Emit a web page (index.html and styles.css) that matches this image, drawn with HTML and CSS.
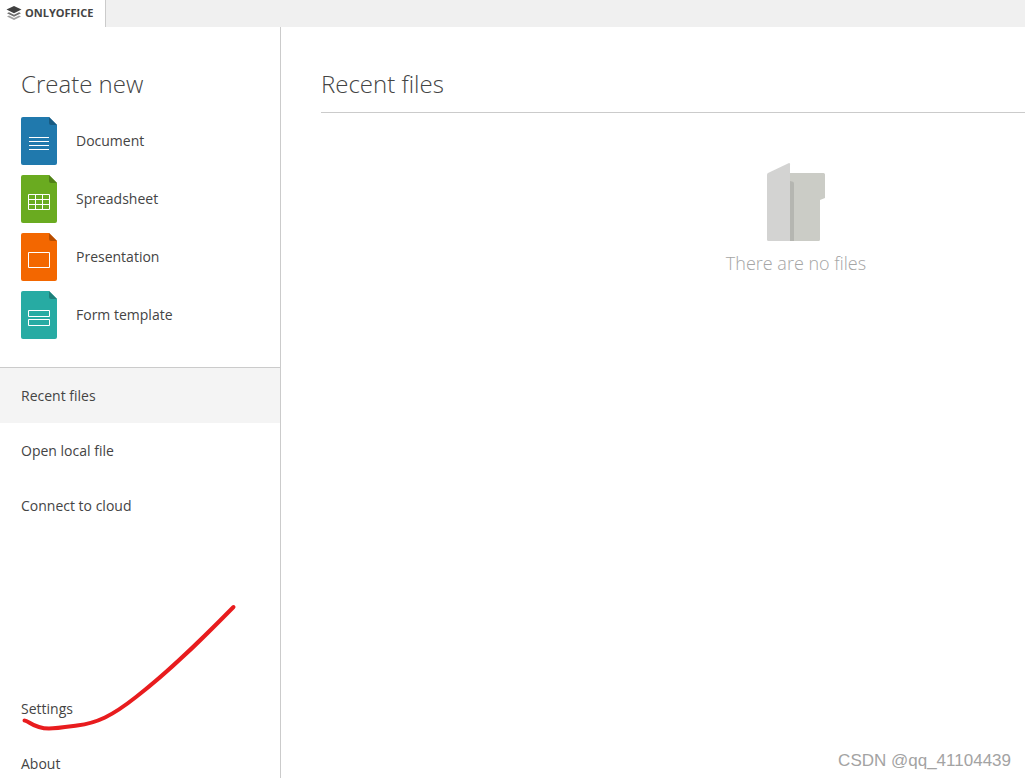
FILE: index.html
```html
<!DOCTYPE html>
<html lang="en">
<head>
<meta charset="utf-8">
<title>ONLYOFFICE</title>
<link rel="stylesheet" href="styles.css">
</head>
<body>
<header class="tabbar">
  <button class="tab" type="button">
    <svg class="logo" width="16" height="16" viewBox="0 0 16 16" aria-hidden="true">
      <path d="M1 11.500l2-.9L8 13l5-2.400 2 .9L8 15z" fill="#a0a0a0"/>
      <path d="M1 8.200l2-.9L8 9.700l5-2.400 2 .9L8 11.800z" fill="#6e6e6e"/>
      <path d="M8 1l7.500 3.500L8 8.200.5 4.500z" fill="#404040"/>
    </svg>
    <span>ONLYOFFICE</span>
  </button>
</header>
<div class="workspace">
  <aside class="sidebar">
    <section class="create">
      <h1 class="title">Create new</h1>
      <div class="create-list">
        <button class="create-item" type="button">
          <svg width="36" height="48" viewBox="0 0 36 48" aria-hidden="true">
            <path d="M2 0h26l8 8v38a2 2 0 0 1-2 2H2a2 2 0 0 1-2-2V2a2 2 0 0 1 2-2z" fill="#2079ad"/>
            <path d="M28 0l8 8h-6a2 2 0 0 1-2-2z" fill="#185b82"/>
            <path d="M8 20.500h20M8 24.500h20M8 28.500h20M8 32.500h20" stroke="#fff"/>
          </svg>
          <span>Document</span>
        </button>
        <button class="create-item" type="button">
          <svg width="36" height="48" viewBox="0 0 36 48" aria-hidden="true">
            <path d="M2 0h26l8 8v38a2 2 0 0 1-2 2H2a2 2 0 0 1-2-2V2a2 2 0 0 1 2-2z" fill="#6aab20"/>
            <path d="M28 0l8 8h-6a2 2 0 0 1-2-2z" fill="#508018"/>
            <path d="M7.500 19.500h21v15h-21zM7.500 24.500h21M7.500 29.500h21M14.500 19.500v15M21.500 19.500v15" fill="none" stroke="#fff"/>
          </svg>
          <span>Spreadsheet</span>
        </button>
        <button class="create-item" type="button">
          <svg width="36" height="48" viewBox="0 0 36 48" aria-hidden="true">
            <path d="M2 0h26l8 8v38a2 2 0 0 1-2 2H2a2 2 0 0 1-2-2V2a2 2 0 0 1 2-2z" fill="#f36700"/>
            <path d="M28 0l8 8h-6a2 2 0 0 1-2-2z" fill="#b64d00"/>
            <path d="M7.500 19.500h21v15h-21z" fill="none" stroke="#fff"/>
          </svg>
          <span>Presentation</span>
        </button>
        <button class="create-item" type="button">
          <svg width="36" height="48" viewBox="0 0 36 48" aria-hidden="true">
            <path d="M2 0h26l8 8v38a2 2 0 0 1-2 2H2a2 2 0 0 1-2-2V2a2 2 0 0 1 2-2z" fill="#27aba3"/>
            <path d="M28 0l8 8h-6a2 2 0 0 1-2-2z" fill="#1d807a"/>
            <path d="M7.500 19.500h21v6h-21zM7.500 28.500h21v6h-21z" fill="none" stroke="#fff"/>
          </svg>
          <span>Form template</span>
        </button>
      </div>
    </section>
    <nav class="menu">
      <a class="menu-item active" href="#recent">Recent files</a>
      <a class="menu-item" href="#open">Open local file</a>
      <a class="menu-item" href="#connect">Connect to cloud</a>
    </nav>
    <nav class="bottom-menu">
      <a class="bottom-link" href="#settings">Settings</a>
      <a class="bottom-link" href="#about">About</a>
      <svg class="marker" width="240" height="140" viewBox="0 0 240 140" aria-hidden="true">
        <path d="M24.500 120.500C29 120.500 33 128.500 49 128.500C56 128.500 66 127 77 125.500C97 123 112 116 136 97C170 71 203 38 233.500 7" fill="none" stroke="#e81c1e" stroke-width="4" stroke-linecap="round"/>
      </svg>
    </nav>
  </aside>
  <main class="content" id="recent">
    <h2 class="title content-title">Recent files</h2>
    <div class="empty">
      <svg width="58" height="78" viewBox="0 0 58 78" aria-hidden="true">
        <path d="M23 10h33.500q1.500 0 1.500 1.500V35l-5 2v39.500q0 1.500-1.500 1.500H23z" fill="#cbccc6"/>
        <path d="M23 18l3 .8q1 .4 1 1.700V78h-4z" fill="#b5b6b1"/>
        <path d="M0 11.500q0-1 1-1.500L21.500.2q1.500-.5 1.500 1V78H1.500Q0 78 0 76.500z" fill="#d3d3d2"/>
      </svg>
      <p class="empty-text">There are no files</p>
    </div>
  </main>
</div>
<p class="watermark">CSDN @qq_41104439</p>
</body>
</html>
```
FILE: styles.css
```css
* {
  box-sizing: border-box;
}

body {
  margin: 0;
  height: 100vh;
  display: flex;
  flex-direction: column;
  background: #fff;
  color: #444;
  font-family: "Open Sans", sans-serif;
  font-size: 14px;
  line-height: 20px;
  overflow: hidden;
}

button {
  margin: 0;
  border: 0;
  background: none;
  color: inherit;
  font: inherit;
  text-align: left;
  cursor: pointer;
}

a {
  color: inherit;
  text-decoration: none;
}

svg {
  flex: none;
  display: block;
}

.tabbar {
  display: flex;
  background: #f0f0f0;
}

.tab {
  display: flex;
  align-items: center;
  gap: 3px;
  height: 27px;
  padding: 0 12px 2px 6px;
  border-right: 1px solid #cbcbcb;
  background: #fff;
  font-size: 11px;
  font-weight: 700;
}

.workspace {
  flex: 1;
  display: flex;
  min-height: 0;
}

.sidebar {
  flex: none;
  display: flex;
  flex-direction: column;
  width: 281px;
  border-right: 1px solid #cbcbcb;
}

.create {
  padding: 40px 21px 28px;
  border-bottom: 1px solid #cbcbcb;
}

.title {
  margin: 0;
  font-size: 24px;
  font-weight: 300;
  line-height: 34px;
}

.create-list {
  display: flex;
  flex-direction: column;
  gap: 10px;
  padding-top: 16px;
}

.create-item {
  display: flex;
  align-items: center;
  gap: 19px;
  padding: 0;
}

.menu {
  display: flex;
  flex-direction: column;
}

.menu-item {
  padding: 18px 21px 17px;
}

.active {
  background: #f4f4f4;
}

.bottom-menu {
  position: relative;
  display: flex;
  flex-direction: column;
  align-items: flex-start;
  gap: 35px;
  margin-top: auto;
  padding: 0 21px 4px;
}

.marker {
  position: absolute;
  left: 0;
  bottom: 38px;
  pointer-events: none;
}

.content {
  flex: 1;
  min-width: 0;
  padding: 40px 0 0 40px;
}

.content-title {
  padding-bottom: 11px;
  border-bottom: 1px solid #cbcbcb;
}

.empty {
  display: flex;
  flex-direction: column;
  align-items: center;
  gap: 10px;
  padding: 50px 0 0 246px;
}

.empty-text {
  margin: 0;
  color: #a5a5a5;
  font-size: 18px;
  font-weight: 300;
  line-height: 25px;
}

.watermark {
  position: absolute;
  right: 14px;
  bottom: 7px;
  margin: 0;
  color: #a3a3a3;
  font-family: "Liberation Sans", Arial, sans-serif;
  font-size: 17px;
}
```
